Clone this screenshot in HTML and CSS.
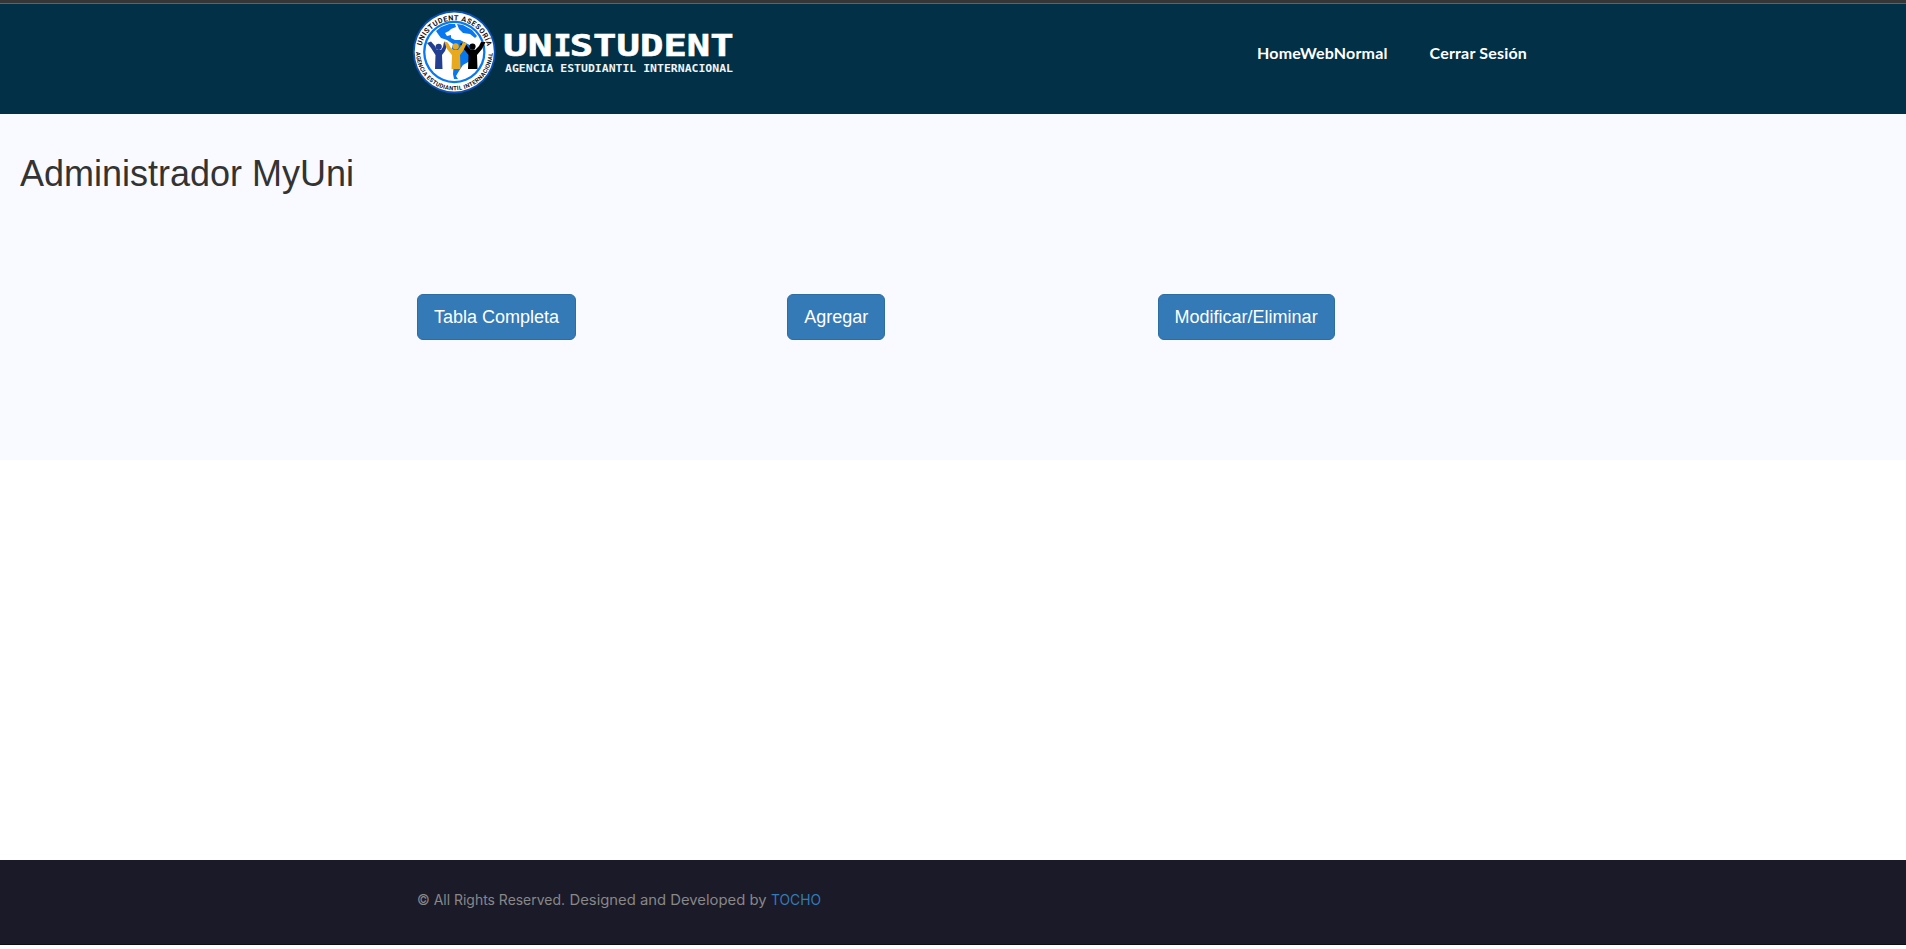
FILE: index.html
```html
<!DOCTYPE html>
<html lang="es">
<head>
<meta charset="utf-8">
<title>Administrador MyUni</title>
<link rel="stylesheet" href="styles.css">
</head>
<body>
<header class="header">
  <div class="container header-inner">
    <svg class="logo" width="330" height="90" viewBox="410 8 330 90">
      <defs>
        <path id="arcTop" d="M420.6 54 A33.7 33.7 0 0 1 488 54"/>
        <path id="arcBottom" d="M416.2 48 A38.3 38.3 0 1 0 492.4 48"/>
      </defs>
      <circle cx="454.3" cy="52" r="41.4" fill="#0d52b5"/>
      <circle cx="454.3" cy="52" r="39.6" fill="#fff"/>
      <circle cx="454.3" cy="52" r="31.2" fill="#0878f0"/>
      <circle cx="454.3" cy="52" r="28.9" fill="#fff"/>
      <path fill="#0878f0" d="M436 31 L441 27 L449 24 L455 24 L456 27 L451 29 L449 31 L445 33 L447 36 L451 35 L451 38 L455 40 L460 40 L466 43 L475 48 L474 54 L470 61 L463 65 L459 71 L456 76 L458 79 L454 79 L453 74 L454 61 L451 52 L453 44 L447 40 L441 38 L438 34 Z M457 24 L463 25 L472 30 L477 36 L475 38 L470 34 L463 33 L459 29Z"/>
      <g fill="#233f91"><circle cx="438.7" cy="46.8" r="3.1"/><path d="M427 43 L431 41.500 L435 46 L437 50 H441 L443 47 L444 42 L448 43 L445 51 L442 55 L442.500 69 H435 L435.500 55 L431 48Z"/></g>
      <g fill="#000"><circle cx="472.5" cy="46.6" r="3.1"/><path d="M460 44 L464 42 L468 47 L471 50 H475 L479 46 L481 42 L485.500 42 L482 49 L477 55 L477.500 69 H468 L468.500 55 L463 48Z"/></g>
      <g fill="#e9a91e"><circle cx="455.700" cy="46.3" r="3.1"/><path d="M444 41 L448 43 L451 48 L454 50 H458 L461 46 L463 42 L467 43 L463 51 L460 55 L460.500 69 H451.500 L452 55 L447 49Z"/></g>
      <text class="seal-text"><textPath href="#arcTop" startOffset="8" textLength="90">UNISTUDENT ASESORÍA</textPath></text>
      <text class="seal-text seal-text-small"><textPath href="#arcBottom" startOffset="4" textLength="119">AGENCIA ESTUDIANTIL INTERNACIONAL</textPath></text>
      <g class="logo-title">
        <text x="503" y="55.8" textLength="49.5" lengthAdjust="spacingAndGlyphs">UN</text><text x="553.5" y="55.8" textLength="18" lengthAdjust="spacingAndGlyphs">I</text><text x="569.7" y="55.8" textLength="164" lengthAdjust="spacingAndGlyphs">STUDENT</text>
      </g>
      <text class="logo-subtitle" x="505" y="72" textLength="228" lengthAdjust="spacingAndGlyphs">AGENCIA ESTUDIANTIL INTERNACIONAL</text>
    </svg>
    <nav class="nav"><a href="#">HomeWebNormal</a><a href="#">Cerrar Sesión</a></nav>
  </div>
</header>
<main class="admin">
  <h1 class="title">Administrador MyUni</h1>
  <div class="container actions">
    <div><a class="btn" href="#">Tabla Completa</a></div>
    <div><a class="btn" href="#">Agregar</a></div>
    <div><a class="btn" href="#">Modificar/Eliminar</a></div>
  </div>
</main>
<footer class="footer">
  <div class="container"><svg class="copyright" width="405" height="30" viewBox="0 0 405 30"><text x="0" y="20" textLength="148" lengthAdjust="spacingAndGlyphs">© All Rights Reserved.</text><text x="152.500" y="20" textLength="197" lengthAdjust="spacingAndGlyphs">Designed and Developed by</text><a href="#"><text class="author" x="354" y="20" textLength="50" lengthAdjust="spacingAndGlyphs">TOCHO</text></a></svg></div>
</footer>
</body>
</html>
```
FILE: styles.css
```css
* { box-sizing: border-box; }
body { margin: 0; background: #fff; font-family: "Liberation Sans", Arial, sans-serif; overflow: hidden; }
a { text-decoration: none; }
.container { width: 1111px; margin-left: 417px; }
.header { height: 114px; background: #023047; border-top: 3px solid #363636; box-shadow: inset 0 1px #5d6468; }
.header-inner { display: flex; justify-content: space-between; }
.logo { display: block; margin: 5px 0 0 -7px; }
.seal-text { font: 700 7.2px "Roboto", sans-serif; fill: #111; }
.seal-text-small { font-size: 5.8px; }
.logo-title { font: 700 31px "DejaVu Sans Mono", monospace; fill: #fff; stroke: #fff; stroke-width: 0.6px; }
.logo-subtitle { font: 700 9.6px "DejaVu Sans Mono", monospace; fill: #eef4f7; }
.nav { display: flex; gap: 42px; padding: 38px 1px 0 0; }
.nav a { font: 700 16px/24px "Lato", sans-serif; letter-spacing: 0.18px; color: #fff; }
.admin { height: 346px; background: #f8faff; padding-top: 40px; }
.title { margin: 0 0 0 20px; font-size: 36px; font-weight: 500; line-height: 40px; color: #333; }
.actions { display: grid; grid-template-columns: repeat(3, 370.3px); padding-top: 100px; }
.btn { display: inline-block; height: 46px; padding: 10px 16px; border: 1px solid #2e6da4; border-radius: 6px; background: #337ab7; color: #fff; font-size: 18px; line-height: 24px; }
.footer { height: 85px; margin-top: 400px; background: #1b1a29; border-bottom: 1px solid #0f0e18; padding-top: 25px; }
.copyright { display: block; font: 400 14px "Inter", sans-serif; fill: #888; }
.author { fill: #337ab7; }
```
